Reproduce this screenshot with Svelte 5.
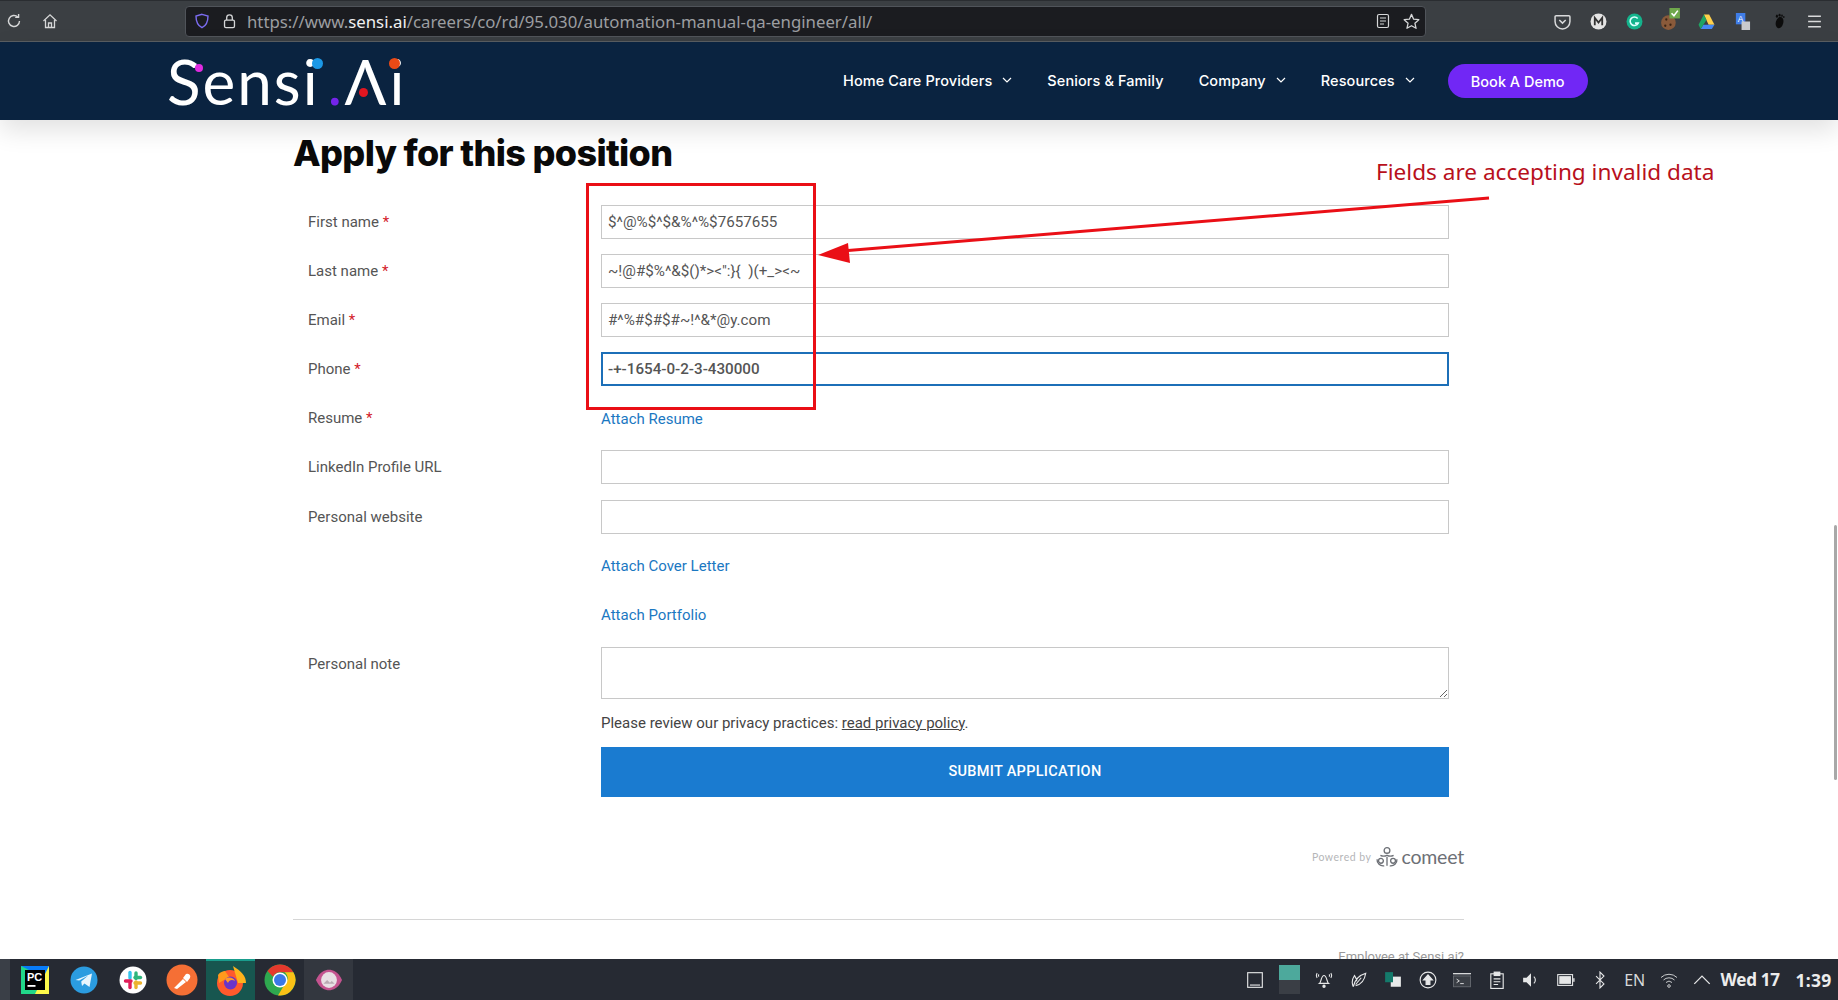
<script>
  const fields = [
    { label: 'First name', req: true, value: '$^@%$^$&%^%$7657655' },
    { label: 'Last name', req: true, value: '~!@#$%^&$()*><":}{  )(+_><~' },
    { label: 'Email', req: true, value: '#^%#$#$#~!^&*@y.com' },
    { label: 'Phone', req: true, value: '-+-1654-0-2-3-430000', focus: true }
  ];
</script>

<div class="screen">
  <header class="toolbar">
    <div class="tool-left">
      <svg class="ic" viewBox="0 0 16 16" fill="none" stroke="#d6d7d8" stroke-width="1.4"><path d="M13.5 8a5.5 5.5 0 1 1-1.7-4"/><path d="M12.6 1v3.4H9.2" stroke-linejoin="round"/></svg>
      <svg class="ic" viewBox="0 0 16 16" fill="none" stroke="#d6d7d8" stroke-width="1.3"><path d="M1.5 8 8 1.8 14.5 8"/><path d="M3.5 7v7.5h9V7"/><path d="M6.5 14.5V10h3v4.5"/></svg>
    </div>
    <div class="urlbar">
      <svg class="shield" viewBox="0 0 16 16" fill="none" stroke="#7b6cf0" stroke-width="1.4"><path d="M8 1.3 14 3c0 6-1.6 9.600-6 11.700C3.600 12.600 2 9 2 3z"/></svg>
      <svg class="lock" viewBox="0 0 16 16" fill="none" stroke="#d6d7d8" stroke-width="1.4"><rect x="2.700" y="7" width="10.600" height="8" rx="1.500"/><path d="M5 7V4.500a3 3 0 0 1 6 0V7"/></svg>
      <span class="url">https://www.<b>sensi.ai</b>/careers/co/rd/95.030/automation-manual-qa-engineer/all/</span>
      <div class="url-actions">
        <svg class="ic" viewBox="0 0 16 16" fill="none" stroke="#d6d7d8" stroke-width="1.200"><rect x="2.500" y="1.500" width="11" height="13" rx="1.500"/><path d="M5 5h6M5 8h6M5 11h4"/></svg>
        <svg class="star" viewBox="0 0 16 16" fill="none" stroke="#d6d7d8" stroke-width="1.200"><path d="m8 1.300 2 4.500 4.900.5-3.700 3.300 1.100 4.800L8 12l-4.300 2.400 1.100-4.800L1.100 6.300 6 5.800z" stroke-linejoin="round"/></svg>
      </div>
    </div>
    <div class="extensions">
      <span class="ext"><svg viewBox="0 0 16 16" fill="none" stroke="#d9dadb" stroke-width="1.400"><path d="M2 2.500h12a1 1 0 0 1 1 1V8a7 7 0 0 1-14 0V3.500a1 1 0 0 1 1-1z"/><path d="m5 6.500 3 3 3-3"/></svg></span>
      <span class="ext"><svg viewBox="0 0 16 16"><circle cx="8" cy="8" r="7.500" fill="#e4e4e4"/><path d="M4.500 11.500v-7L8 9l3.500-4.500v7" fill="none" stroke="#333" stroke-width="1.700"/></svg></span>
      <span class="ext"><svg viewBox="0 0 16 16"><circle cx="8" cy="8" r="7.500" fill="#14b38c"/><path d="M11 5.200a4 4 0 1 0 .5 4.300H8.500" fill="none" stroke="#dff" stroke-width="1.500"/></svg></span>
      <span class="ext cookie"><svg viewBox="0 0 18 22"><circle cx="7" cy="14" r="7" fill="#8a5a3a"/><circle cx="5" cy="11" r="1.100" fill="#3a2414"/><circle cx="9" cy="16" r="1.100" fill="#3a2414"/><circle cx="4" cy="17" r="1.100" fill="#3a2414"/><rect x="8" y="0" width="10" height="10" fill="#6fa84c"/><path d="m10 5 2.300 2.500 3.700-5" fill="none" stroke="#fff" stroke-width="1.500"/></svg></span>
      <span class="ext"><svg viewBox="0 0 16 16"><path d="M5.500 1.500h5L15.500 11H10z" fill="#ffd04b"/><path d="M5 11h10.500L13 15H2.500z" fill="#4688f4"/><path d="M5.500 1.500 8 6.500l-5.500 8.500L.5 11z" fill="#1fa463"/></svg></span>
      <span class="ext"><svg viewBox="0 0 18 18"><rect x="2" y="0" width="10" height="12" fill="#3f7de8"/><text x="4" y="10" font-size="9" fill="#fff" font-family="Liberation Sans">A</text><rect x="8" y="9" width="9" height="9" fill="#c9cbcd"/></svg></span>
      <span class="ext"><svg viewBox="0 0 16 16" fill="#0c0c0c"><ellipse cx="9" cy="9" rx="3.500" ry="5.500" transform="rotate(15 9 9)"/><ellipse cx="6.500" cy="3" rx="1" ry="1.500"/><ellipse cx="9" cy="2" rx="1" ry="1.300"/><ellipse cx="11.300" cy="2.500" rx=".8" ry="1.100"/><ellipse cx="13" cy="3.800" rx=".7" ry="1"/></svg></span>
      <span class="ext"><svg viewBox="0 0 16 16" stroke="#d9dadb" stroke-width="1.300"><path d="M2 3h12M2 8h12M2 13h12"/></svg></span>
    </div>
  </header>

  <nav class="site-nav">
    <a class="logo" href="#top">
      <span class="logo-word">Sensi</span><span class="logo-gap">.</span><span class="logo-a">Λ</span><span class="logo-i">i</span>
      <i class="dot magenta"></i><i class="dot blue"></i><i class="dot orange"></i><i class="dot red"></i>
    </a>
    <ul class="menu">
      <li>Home Care Providers <svg class="chev" viewBox="0 0 10 6"><path d="m1 1 4 4 4-4"/></svg></li>
      <li>Seniors &amp; Family</li>
      <li>Company <svg class="chev" viewBox="0 0 10 6"><path d="m1 1 4 4 4-4"/></svg></li>
      <li>Resources <svg class="chev" viewBox="0 0 10 6"><path d="m1 1 4 4 4-4"/></svg></li>
    </ul>
    <button class="demo">Book A Demo</button>
  </nav>

  <main class="page">
    <div class="scrollbar"></div>
    <section class="content">
      <h1>Apply for this position</h1>
      <form>
        {#each fields as f}
          <div class="row">
            <label for={f.label}>{f.label} <em>*</em></label>
            <input id={f.label} class:focus={f.focus} value={f.value} readonly />
          </div>
        {/each}
        <div class="row"><label>Resume <em>*</em></label><a class="attach" href="#top">Attach Resume</a></div>
        <div class="row"><label for="li">LinkedIn Profile URL</label><input id="li" readonly /></div>
        <div class="row"><label for="web">Personal website</label><input id="web" readonly /></div>
        <div class="row"><span></span><a class="attach" href="#top">Attach Cover Letter</a></div>
        <div class="row"><span></span><a class="attach" href="#top">Attach Portfolio</a></div>
        <div class="row note"><label for="note">Personal note</label><textarea id="note" readonly></textarea></div>
        <div class="row privacy"><span></span><p>Please review our privacy practices: <u>read privacy policy</u>.</p></div>
        <div class="row submit"><span></span><button type="button">SUBMIT APPLICATION</button></div>
      </form>
      <div class="powered">
        <span class="pw">Powered by</span>
        <svg viewBox="0 0 20 20" fill="none" stroke="#6d7076" stroke-width="1.200"><circle cx="10" cy="4" r="2.600"/><circle cx="4.500" cy="13.500" r="2.200"/><circle cx="15.500" cy="13.500" r="2.200"/><path d="M4 8.500a7 7 0 0 0 6 0 7 7 0 0 0 6 0M1 12a5.500 5.500 0 0 0 6.500 6M19 12a5.500 5.500 0 0 1-6.500 6M10 10v8"/></svg>
        <span class="cm">comeet</span>
      </div>
      <hr />
      <p class="employee">Employee at Sensi.ai?</p>
    </section>

    <div class="callout-box"></div>
    <svg class="callout-arrow" viewBox="0 0 1838 840" fill="none">
      <path d="M1489 78 842 131" stroke="#ea0f16" stroke-width="3"/>
      <path d="m818 135 30-12 2 20z" fill="#ea0f16"/>
    </svg>
    <p class="callout-text">Fields are accepting invalid data</p>
  </main>

  <footer class="taskbar">
    <div class="apps">
      <span class="sliver"></span>
      <span class="app"><svg viewBox="0 0 28 28"><rect width="28" height="28" fill="#21d789"/><path d="M0 0h28v14z" fill="#087cfa"/><path d="M28 0v28H14z" fill="#fcf84a"/><rect x="4" y="4" width="20" height="20" fill="#000"/><text x="6" y="15" font-size="11" font-weight="700" fill="#fff" font-family="Liberation Sans">PC</text><rect x="6.500" y="19" width="8" height="1.800" fill="#fff"/></svg></span>
      <span class="app"><svg viewBox="0 0 28 28"><circle cx="14" cy="14" r="13.500" fill="#2b9ce0"/><path d="M5.500 14 22 7.500 19.500 21l-5-3.500-2.500 2.500-.8-4.500 7-6-9 5z" fill="#e8f5fd"/></svg></span>
      <span class="app"><svg viewBox="0 0 28 28"><circle cx="14" cy="14" r="13.500" fill="#fff"/><g stroke-width="3.400" stroke-linecap="round"><path d="M11 6.500v5.500" stroke="#36c5f0"/><path d="M6.500 15H12" stroke="#e01e5a"/><path d="M17 7v5.500" stroke="#2eb67d"/><path d="M16 11.500h5.500" stroke="#2eb67d"/><path d="M17 16v5.500" stroke="#ecb22e"/><path d="M16 17h5.500" stroke="#ecb22e"/><path d="M11 16.500v5" stroke="#e01e5a"/></g></svg></span>
      <span class="app big"><svg viewBox="0 0 32 32"><circle cx="16" cy="16" r="15.500" fill="#f56f35"/><path d="m8 24 9-9 3 3-9 7zM17 14l3-4a3 3 0 0 1 4 4l-3 4z" fill="#fff"/></svg></span>
      <span class="app active big"><svg viewBox="0 0 32 32"><circle cx="15" cy="18" r="13" fill="#ff5a2c"/><path d="M18 1c8 5 13 10 13 17h-8z" fill="#ffb21c"/><path d="M3 10c2-3 5-4 7-4l4 6-10 6z" fill="#ff9a1c"/><circle cx="15.500" cy="18" r="6.500" fill="#6a34c9"/><path d="M10 14c4-3 9-1 10 2-3-2-6-1-7 2z" fill="#ff9a2c"/></svg></span>
      <span class="app big"><svg viewBox="0 0 32 32"><circle cx="16" cy="16" r="15.500" fill="#2ea84f"/><path d="M16 .5a15.500 15.500 0 0 1 13.400 7.800H16a7.700 7.700 0 0 0-7 4.500L3.500 7A15.500 15.500 0 0 1 16 .5z" fill="#e5392d"/><path d="M29.400 8.300A15.500 15.500 0 0 1 14 31.400l6.500-11 3-4.400a7.700 7.700 0 0 0-3-7.700z" fill="#fbc116"/><circle cx="16" cy="16" r="7.500" fill="#fff"/><circle cx="16" cy="16" r="6" fill="#3b78e7"/></svg></span>
      <span class="app shade"><svg viewBox="0 0 30 24"><path d="M1 12C5 3 11 1 15 1s10 2 14 11c-4 9-10 11-14 11S5 21 1 12z" fill="#c4538f"/><circle cx="15" cy="12" r="8.500" fill="#e8dfe4"/><path d="m9 16 4-4 3 3 2-2 3 3z" fill="#b9aab3"/></svg></span>
    </div>
    <div class="tray">
      <span class="t"><svg viewBox="0 0 16 16" fill="none" stroke="#e6e7e8" stroke-width="1"><rect x="1.500" y="1.500" width="13" height="13"/><path d="M3.500 12.500h9"/></svg></span>
      <span class="t"><span class="desk"><i></i><i></i></span></span>
      <span class="t"><svg viewBox="0 0 16 16" fill="none" stroke="#e6e7e8" stroke-width="1"><path d="M4 11c1.500-1 1.500-7 4-7s2.500 6 4 7z"/><path d="M2 2c-1 1-1 3 0 4M14 2c1 1 1 3 0 4M3.500 3c-.5.500-.5 1.500 0 2M12.500 3c.5.500.5 1.500 0 2"/><circle cx="8" cy="13.500" r="1" fill="#e6e7e8"/></svg></span>
      <span class="t"><svg viewBox="0 0 16 16" fill="none" stroke="#e6e7e8" stroke-width="1"><path d="M3 14c1-5 4-10 11-12-1 6-4 10-9 11M3 14C1 10 2 7 4 4c1 2 2 3 2 5"/><path d="M5 12l5-6"/></svg></span>
      <span class="t"><svg viewBox="0 0 16 16"><rect x="6" y="5" width="9" height="9" fill="#e9eaea"/><rect x="1" y="1" width="7" height="9" fill="#147a6b"/></svg></span>
      <span class="t"><svg viewBox="0 0 16 16" fill="none" stroke="#e6e7e8" stroke-width="1"><circle cx="8" cy="8" r="7"/><path d="M8 3.500 12 8H9.700v4H6.300V8H4z" fill="#e6e7e8"/></svg></span>
      <span class="t"><svg viewBox="0 0 20 16" fill="none" stroke="#e6e7e8"><path d="M0 1h20" stroke-width="1.400"/><rect x=".5" y="3.500" width="19" height="12" stroke="#666a70" fill="#3a3e45"/><path d="m4 7 3 2-3 2M8 12h4"/></svg></span>
      <span class="t"><svg viewBox="0 0 16 16" fill="none" stroke="#e6e7e8" stroke-width="1"><rect x="2.500" y="2.500" width="11" height="13"/><rect x="5.500" y="1" width="5" height="3" fill="#e6e7e8"/><path d="M5 7h6M5 9.500h6M5 12h4"/></svg></span>
      <span class="t"><svg viewBox="0 0 16 16" fill="none"><path d="M1 6h3l4-4v12l-4-4H1z" fill="#e6e7e8"/><path d="M10.500 5a4 4 0 0 1 0 6" stroke="#e6e7e8"/></svg></span>
      <span class="t"><svg viewBox="0 0 20 14" fill="none" stroke="#e6e7e8"><rect x=".8" y="1" width="16.500" height="12" stroke-width="1.200"/><rect x="2.500" y="2.700" width="13" height="8.600" fill="#e6e7e8" stroke="none"/><rect x="18" y="5" width="1.500" height="4" fill="#e6e7e8" stroke="none"/></svg></span>
      <span class="t"><svg viewBox="0 0 16 16" fill="none" stroke="#e6e7e8"><path d="m4.500 4.500 7 7L8 15V1l3.500 3.500-7 7"/></svg></span>
      <span class="t en">EN</span>
      <span class="t"><svg viewBox="0 0 18 16" fill="none" stroke="#c9cbcd" stroke-width="1"><path d="M1 5.500a11.500 11.500 0 0 1 16 0M3.500 8a8 8 0 0 1 11 0M6 10.500a4.300 4.300 0 0 1 6 0"/><circle cx="9" cy="14" r="1.300"/></svg></span>
      <span class="t narrow"><svg viewBox="0 0 14 8" fill="none" stroke="#e6e7e8" stroke-width="1"><path d="m1 7 6-6 6 6"/></svg></span>
      <strong class="day">Wed 17</strong>
      <strong class="time">1:39</strong>
    </div>
  </footer>
</div>

<style>
  :global(body) { margin: 0; background: #fff; }
  .screen { width: 1838px; height: 1000px; display: flex; flex-direction: column; overflow: hidden; font-family: Roboto, sans-serif; }

  .toolbar { flex: none; background: #3b3f43; border-top: 1px solid #2a2d31; border-bottom: 1px solid #5a5e62; box-sizing: border-box; display: flex; align-items: center; height: 42px; }
  .tool-left { width: 185px; flex: none; display: flex; align-items: center; gap: 20px; padding-left: 6px; box-sizing: border-box; }
  .ic { width: 16px; height: 16px; }
  .urlbar { width: 1241px; height: 31px; flex: none; background: #1b1c20; border: 1px solid #50545a; border-radius: 4px; box-sizing: border-box; display: flex; align-items: center; padding-left: 8px; }
  .shield { width: 16px; height: 16px; margin-right: 12px; }
  .lock { width: 15px; height: 16px; margin-right: 10px; }
  .url { color: #9c9ea1; font: 16.800px "Noto Sans", sans-serif; white-space: nowrap; flex: 1; }
  .url b { color: #f0f0f0; font-weight: 400; }
  .url-actions { display: flex; align-items: center; gap: 12px; padding-right: 5px; }
  .star { width: 17px; height: 17px; }
  .extensions { flex: 1; display: flex; align-items: center; padding-left: 118px; }
  .ext { width: 36px; display: flex; justify-content: center; }
  .ext svg { width: 17px; height: 17px; }
  .ext.cookie svg { width: 19px; height: 23px; margin-top: -4px; }

  .site-nav { height: 78px; flex: none; background: #0a2340; display: flex; align-items: center; position: relative; z-index: 2; padding-left: 167px; box-shadow: 0 10px 26px rgba(0,0,0,.12); }
  .logo { position: relative; display: flex; align-items: baseline; flex: none; width: 236px; height: 60px; color: #fff; text-decoration: none; font: 400 62px/60px Lato, sans-serif; }
  .logo-word { letter-spacing: 2px; }
  .logo-gap { color: #7424ea; width: 25px; flex: none; padding-left: 8px; box-sizing: border-box; }
  .logo-a { width: 44px; flex: none; margin-right: 1px; }
  .logo-i { flex: none; }
  .dot { position: absolute; width: 8px; height: 8px; border-radius: 50%; }
  .magenta { left: 28px; top: 13px; background: #e02be0; }
  .blue { left: 145px; top: 7px; width: 11px; height: 11px; background: #1b98e6; }
  .orange { left: 222px; top: 7px; width: 11px; height: 11px; background: #ea4a16; }
  .red { left: 192px; top: 37px; width: 9px; height: 9px; background: #e21620; }
  .menu { list-style: none; margin: -2px 0 0 440px; padding: 0; display: flex; gap: 35px; color: #fff; font: 500 14.500px Inter, sans-serif; letter-spacing: .1px; }
  .menu li { display: flex; align-items: center; gap: 10px; white-space: nowrap; }
  .chev { width: 10px; height: 6px; fill: none; stroke: #fff; stroke-width: 1.200; }
  .demo { margin-left: 33px; width: 140px; height: 34px; border: 0; border-radius: 17px; background: #7127f5; color: #fff; font: 500 14.500px Inter, sans-serif; }

  .page { position: relative; flex: 1; min-height: 0; overflow: hidden; background: #fff; }
  .scrollbar { position: absolute; right: 1px; top: 405px; width: 3px; height: 255px; border-radius: 2px; background: #a8a8a8; }
  .content { margin-left: 293px; width: 1171px; color: #555; }
  h1 { margin: 0; padding-top: 12px; height: 85px; box-sizing: border-box; color: #0a0a0a; font: 800 36px/42px Inter, sans-serif; letter-spacing: -.65px; }
  .row { display: grid; grid-template-columns: 308px 848px; margin-bottom: 15.100px; min-height: 34px; align-items: center; }
  label { padding-left: 15px; font-size: 15px; color: #555; }
  em { color: #d3192a; font-style: normal; }
  input { height: 34px; width: 848px; box-sizing: border-box; border: 1px solid #c8c8c8; padding: 0 6px; font: 15.200px Roboto, sans-serif; color: #555; outline: none; }
  input.focus { border: 2px solid #1c6fb8; padding: 0 5px; font-size: 15.200px; font-weight: 500; }
  .attach { color: #1b78c2; font-size: 15px; text-decoration: none; padding-top: 1px; }
  .note { align-items: start; margin-bottom: 15px; }
  .note label { padding-top: 8px; }
  textarea { width: 848px; height: 52px; box-sizing: border-box; border: 1px solid #c8c8c8; display: block; outline: none; margin: 0; }
  .privacy { min-height: 18px; margin-bottom: 15px; }
  .privacy p { margin: 0; font-size: 15px; color: #444; white-space: nowrap; }
  .submit { margin-bottom: 0; }
  .submit button { width: 848px; height: 50px; border: 0; background: #1a7bd0; color: #fff; font: 500 14.500px Roboto, sans-serif; letter-spacing: .3px; }
  .powered { margin-top: 48px; height: 24px; display: flex; align-items: center; justify-content: flex-end; }
  .pw { color: #b5b6b8; font: 10.500px Lato, sans-serif; letter-spacing: .5px; margin-right: 5px; }
  .powered svg { width: 22px; height: 22px; margin-right: 3px; }
  .cm { color: #6d7076; font: 400 19.500px Lato, sans-serif; letter-spacing: -.2px; }
  hr { border: 0; border-top: 1px solid #d6d6d6; margin: 50px 0 0; }
  .employee { margin: 29px 0 0; text-align: right; color: #999; font-size: 13px; }

  .callout-box { position: absolute; left: 586px; top: 63px; width: 230px; height: 227px; box-sizing: border-box; border: 3px solid #ea0f16; }
  .callout-arrow { position: absolute; left: 0; top: 0; width: 1838px; height: 840px; pointer-events: none; }
  .callout-text { position: absolute; left: 1376px; top: 36px; margin: 0; color: #b8101c; font: 22.600px "Noto Sans", sans-serif; white-space: nowrap; }

  .taskbar { height: 41px; flex: none; background: #262a33; display: flex; align-items: stretch; position: relative; z-index: 3; }
  .apps { display: flex; }
  .sliver { width: 10px; background: #3a3f47; }
  .app { width: 49px; display: flex; align-items: center; justify-content: center; }
  .app svg { width: 28px; height: 28px; }
  .app.big svg { width: 32px; height: 32px; }
  .app.active { background: #17564f; border-top: 2px solid #1a9d8d; box-sizing: border-box; }
  .app.shade { background: #33373f; }
  .tray { margin-left: auto; display: flex; align-items: center; width: 600px; box-sizing: border-box; }
  .t { width: 34.500px; display: flex; align-items: center; justify-content: center; color: #e6e7e8; flex: none; }
  .t svg { width: 18px; height: 18px; }
  .t.en { font: 16px "Noto Sans", sans-serif; color: #d8d9da; }
  .t.narrow { width: 30px; }
  .desk { width: 21px; height: 29px; display: flex; flex-direction: column; }
  .desk i { flex: 1; background: #3a3e45; }
  .desk i:first-child { background: #4da99c; }
  .day { width: 75px; margin-left: 4px; color: #ececec; font: 700 17px "Noto Sans", sans-serif; letter-spacing: -.3px; white-space: nowrap; flex: none; }
  .time { color: #ececec; font: 700 17.500px "Noto Sans", sans-serif; letter-spacing: .3px; }
</style>
